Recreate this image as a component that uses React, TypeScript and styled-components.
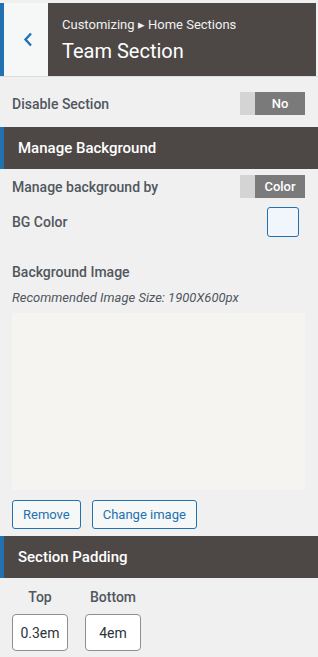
import styled, { createGlobalStyle } from 'styled-components';

const GlobalStyle = createGlobalStyle`
  html, body {
    margin: 0;
    padding: 0;
    background: #f0f0f1;
    font-family: Roboto, "Liberation Sans", sans-serif;
    overflow: hidden;
  }
`;

const Panel = styled.div`
  width: 318px;
  padding-top: 3px;
`;

const Header = styled.div`
  display: flex;
  height: 73px;
  border-bottom: 1px solid #dcdcde;
`;

const BackButton = styled.button`
  width: 48px;
  flex: none;
  display: flex;
  align-items: center;
  justify-content: center;
  padding: 0 0 0 4px;
  border: 0;
  border-left: 4px solid #2271b1;
  background: #f6f7f7;
  color: #2271b1;
  cursor: pointer;
`;

const TitleBox = styled.div`
  flex: 1;
  margin-right: 2px;
  background: #4d4846;
  color: #fff;
  padding: 14px 0 0 14px;
`;

const Crumb = styled.div`
  font-size: 13px;
  line-height: 16px;
  color: #f0f0f0;
`;

const Title = styled.div`
  font-size: 20px;
  line-height: 24px;
  margin-top: 6px;
`;

const Row = styled.div<{ $top: number }>`
  display: flex;
  align-items: center;
  justify-content: space-between;
  padding: 0 13px 0 12px;
  margin-top: ${(p) => p.$top}px;
`;

const Label = styled.div`
  font-size: 14px;
  font-weight: 500;
  color: #50575e;
`;

const Toggle = styled.div`
  display: flex;
  width: 65px;
  height: 23px;
`;

const ToggleOff = styled.span`
  width: 15px;
  background: #d4d4d4;
`;

const ToggleOn = styled.span`
  flex: 1;
  display: flex;
  align-items: center;
  justify-content: center;
  background: #7a7a7a;
  color: #fff;
  font-size: 13px;
  font-weight: 500;
`;

const SectionHead = styled.div<{ $top: number }>`
  height: 42px;
  margin-top: ${(p) => p.$top}px;
  display: flex;
  align-items: center;
  background: #4d4846;
  border-left: 4px solid #2271b1;
  padding-left: 14px;
  color: #fff;
  font-size: 15px;
  font-weight: 500;
`;

const Swatch = styled.div`
  width: 30px;
  height: 28px;
  margin-right: 6px;
  border: 1px solid #2271b1;
  border-radius: 3px;
  background: #f0f6fc;
`;

const Block = styled.div<{ $top: number }>`
  padding: 0 13px 0 12px;
  margin-top: ${(p) => p.$top}px;
`;

const Note = styled.div`
  font-size: 13px;
  font-style: italic;
  color: #50575e;
  margin-top: 10px;
`;

const ImageBox = styled.div`
  height: 177px;
  margin-top: 8px;
  background: #f5f4f1;
`;

const Buttons = styled.div`
  display: flex;
  gap: 11px;
  padding: 0 12px;
  margin-top: 10px;
`;

const Btn = styled.button`
  height: 29px;
  padding: 0 10px;
  border: 1px solid #2271b1;
  border-radius: 3px;
  background: #f6f7f7;
  color: #2271b1;
  font-family: Roboto, "Liberation Sans", sans-serif;
  font-size: 13px;
`;

const PadGrid = styled.div`
  display: flex;
  gap: 17px;
  padding: 0 12px;
  margin-top: 11px;
`;

const PadCol = styled.div`
  display: flex;
  flex-direction: column;
  align-items: center;
  gap: 9px;
`;

const PadInput = styled.div`
  width: 54px;
  height: 35px;
  display: flex;
  align-items: center;
  justify-content: center;
  background: #fff;
  border: 1px solid #8c8f94;
  border-radius: 4px;
  font-size: 14px;
  color: #2c3338;
`;

export default function App() {
  return (
    <Panel>
      <GlobalStyle />
      <Header>
        <BackButton aria-label="Back">
          <svg width="11" height="15" viewBox="0 0 11 15">
            <path d="M8 1.5 L2.5 7.5 L8 13.5" fill="none" stroke="currentColor" strokeWidth="2.4" />
          </svg>
        </BackButton>
        <TitleBox>
          <Crumb>Customizing ▸ Home Sections</Crumb>
          <Title>Team Section</Title>
        </TitleBox>
      </Header>

      <Row $top={15}>
        <Label>Disable Section</Label>
        <Toggle>
          <ToggleOff />
          <ToggleOn>No</ToggleOn>
        </Toggle>
      </Row>

      <SectionHead $top={12}>Manage Background</SectionHead>

      <Row $top={6}>
        <Label>Manage background by</Label>
        <Toggle>
          <ToggleOff />
          <ToggleOn>Color</ToggleOn>
        </Toggle>
      </Row>

      <Row $top={9}>
        <Label>BG Color</Label>
        <Swatch />
      </Row>

      <Block $top={27}>
        <Label>Background Image</Label>
        <Note>Recommended Image Size: 1900X600px</Note>
        <ImageBox />
      </Block>

      <Buttons>
        <Btn>Remove</Btn>
        <Btn>Change image</Btn>
      </Buttons>

      <SectionHead $top={7}>Section Padding</SectionHead>

      <PadGrid>
        <PadCol>
          <Label>Top</Label>
          <PadInput>0.3em</PadInput>
        </PadCol>
        <PadCol>
          <Label>Bottom</Label>
          <PadInput>4em</PadInput>
        </PadCol>
      </PadGrid>
    </Panel>
  );
}
